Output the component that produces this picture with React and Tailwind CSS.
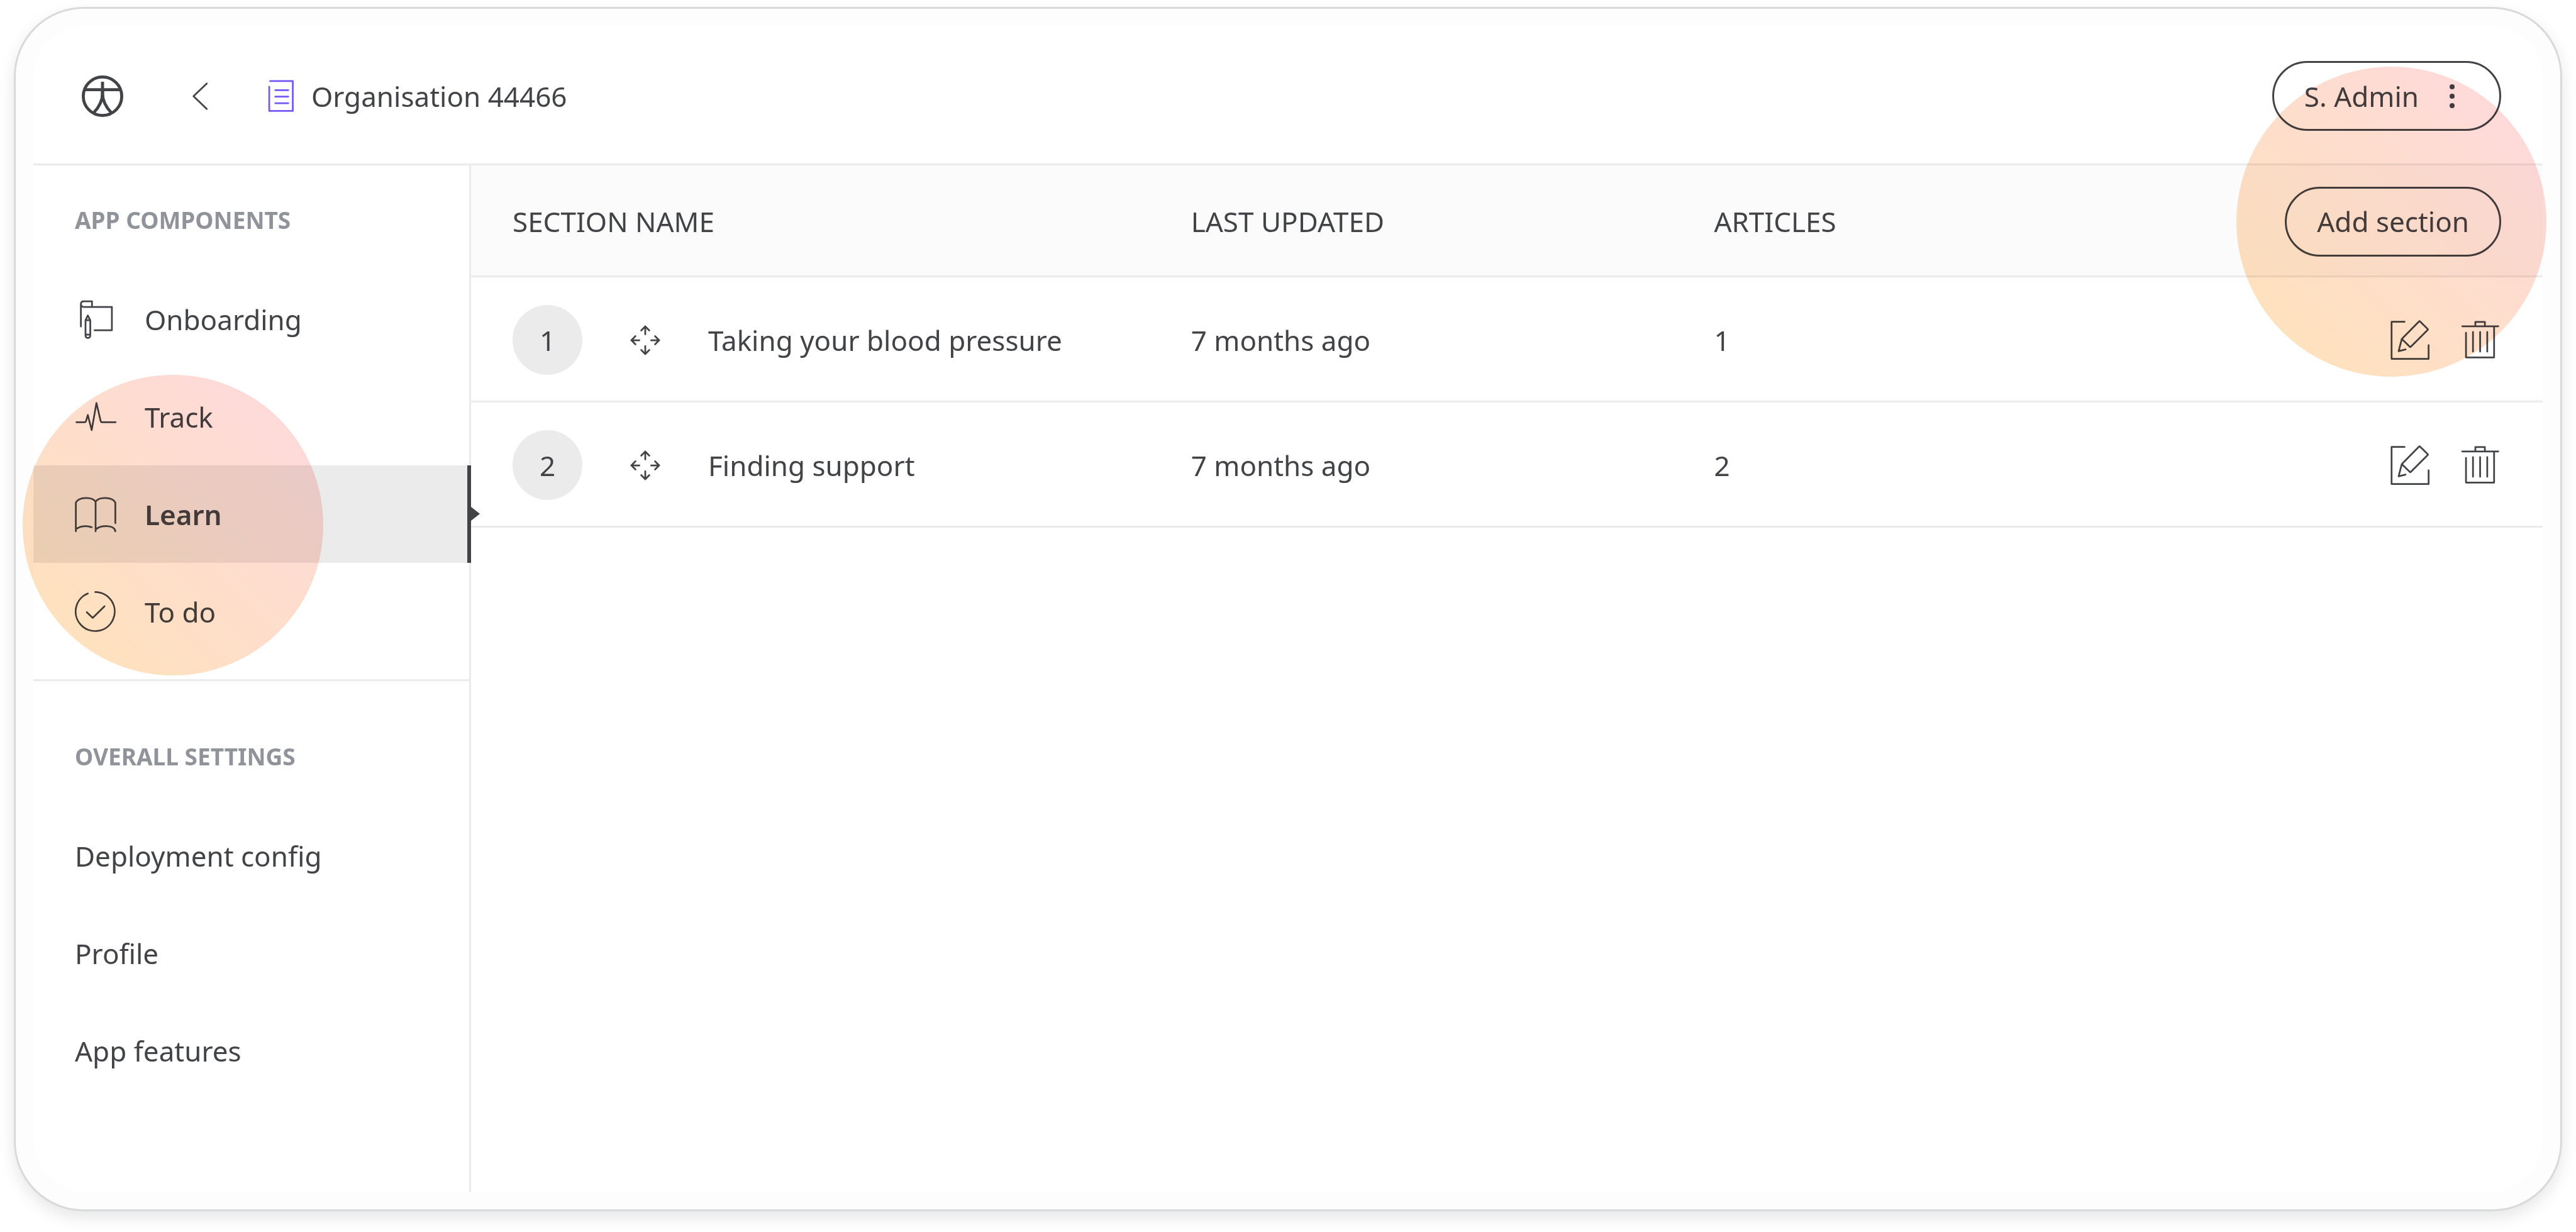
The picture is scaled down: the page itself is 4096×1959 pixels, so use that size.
import React from "react";

const ink = "#424347";

function Icon({ viewBox, width = 12, color = ink, cap = "round", label, children }) {
  return (
    <svg
      className="block size-[66px] shrink-0"
      viewBox={viewBox}
      fill="none"
      stroke={color}
      strokeWidth={width}
      strokeLinecap={cap}
      strokeLinejoin="round"
      role={label ? "img" : undefined}
      aria-label={label}
      aria-hidden={label ? undefined : true}
    >
      {children}
    </svg>
  );
}

const LogoIcon = () => (
  <Icon viewBox="188 172 96 96" width={7} cap="butt" label="Home">
    <circle cx="236" cy="220" r="44.5" />
    <path d="M236 186.500V222M194 205H278" />
    <path d="M236 205V214C236 232 226 247 215.500 258.500M236 205V214C236 232 246 247 256.500 258.500" />
  </Icon>
);

const ChevronIcon = () => (
  <Icon viewBox="412 172 96 96" width={4}>
    <path d="M475.700 190.500L445 220L475.700 249.500" />
  </Icon>
);

const DocumentIcon = () => (
  <Icon viewBox="597 172 96 96" width={4} color="#7657F5">
    <path d="M619.500 185H672V254H617.500V198" />
    <path d="M631.500 206H661.500M631.500 221H661.500M631.500 236H661.500" />
  </Icon>
);

const OnboardingIcon = () => (
  <Icon viewBox="36 42 288 288">
    <path d="M78 235V80C78 68 86 60 98 60H155V98M78 80C79 92 87 99 98 99H293V261H173" />
    <path d="M110 191L126 158L143 191V297C143 307 136 314 126.500 314C117 314 110 307 110 297Z M110 191H143M110 291H143" />
  </Icon>
);

const TrackIcon = () => (
  <Icon viewBox="36 24 288 288">
    <path d="M47 204H106Q111 204 113 198L126 154L153 259L186 71L215 196Q217 204 222 204H319" />
  </Icon>
);

const LearnIcon = () => (
  <Icon viewBox="36 36 288 288">
    <path d="M153 269C122 257 72 258 43 283V297V98C64 57 158 57 180 92V297M180 92C202 57 296 57 317 98V240M180 285C212 252 312 250 317 297" />
  </Icon>
);

const TodoIcon = () => (
  <Icon viewBox="36 48 288 288">
    <path d="M178 54A135.500 135.500 0 1 1 126 64" />
    <path d="M119 194L160 233L242 153" />
  </Icon>
);

const MoveIcon = () => (
  <Icon viewBox="36 36 288 288">
    <path d="M180 139V83M152 112L180 84L208 112" />
    <path d="M180 221V277M152 248L180 276L208 248" />
    <path d="M139 180H83M112 152L84 180L112 208" />
    <path d="M221 180H277M248 152L276 180L248 208" />
  </Icon>
);

const EditIcon = () => (
  <Icon viewBox="252 156 288 288">
    <path d="M354 172H264V429H521V334" />
    <path d="M361 364L313 376L335 291L454 170Q458 166 462 170L514 221Q518 225 514 229L398 345Q394 349 390 345L335 291" />
  </Icon>
);

const TrashIcon = () => (
  <Icon viewBox="732 156 288 288">
    <path d="M750 203H1000M841 203V173H907V203M776 248V419H971V203" />
    <path d="M824.500 243V379M874 243V379M923.500 243V379" />
  </Icon>
);

const DotsIcon = () => (
  <svg className="block size-[66px] shrink-0" viewBox="0 0 66 66" fill={ink} aria-hidden="true">
    <circle cx="33" cy="18" r="4" />
    <circle cx="33" cy="33" r="4" />
    <circle cx="33" cy="48" r="4" />
  </svg>
);

const components = [
  { name: "Onboarding", icon: OnboardingIcon },
  { name: "Track", icon: TrackIcon },
  { name: "Learn", icon: LearnIcon, active: true },
  { name: "To do", icon: TodoIcon },
];

const settings = ["Deployment config", "Profile", "App features"];

const sections = [
  { id: 1, name: "Taking your blood pressure", updated: "7 months ago", articles: 1 },
  { id: 2, name: "Finding support", updated: "7 months ago", articles: 2 },
];

const pill =
  "inline-flex h-[111px] items-center rounded-full border-[3px] border-[#424347] text-[44px] leading-[60px] font-normal";

function NavItem({ name, icon: Glyph, active }) {
  return (
    <li>
      <a
        href="#"
        aria-current={active ? "page" : undefined}
        className={
          active
            ? "relative -mr-[3px] flex h-[155px] items-center gap-[45px] border-r-[6px] border-[#424347] bg-[#ebebeb] pl-[66px] font-semibold"
            : "flex h-[155px] items-center gap-[45px] pl-[66px]"
        }
      >
        {Glyph && <Glyph />}
        <span>{name}</span>
        {active && (
          <svg className="absolute top-[66px] -right-[20px] h-[22px] w-[14px]" viewBox="0 0 14 22" fill={ink} aria-hidden="true">
            <path d="M0 0L14 11L0 22Z" />
          </svg>
        )}
      </a>
    </li>
  );
}

function Sidebar() {
  const heading = "pl-[66px] text-[37px] leading-[52px] font-bold text-[#909399]";
  return (
    <nav className="relative w-[696px] shrink-0 border-r-[3px] border-[#ebebeb]">
      <div className="border-b-[3px] border-[#ebebeb] pt-[61px] pb-[30px]">
        <h2 className={heading}>APP COMPONENTS</h2>
        <ul className="pt-[54px]">
          {components.map((item) => (
            <NavItem key={item.name} {...item} />
          ))}
        </ul>
      </div>
      <div className="pt-[94px]">
        <h2 className={heading}>OVERALL SETTINGS</h2>
        <ul className="pt-[54px]">
          {settings.map((name) => (
            <NavItem key={name} name={name} />
          ))}
        </ul>
      </div>
      <div
        className="pointer-events-none absolute top-[333px] -left-[17px] size-[478px] rounded-full bg-linear-to-tr from-[#ffe3b8] to-[#fdd8de] mix-blend-multiply"
        aria-hidden="true"
      />
    </nav>
  );
}

function SectionTable() {
  const head = "h-[178px] border-b-[3px] border-[#ebebeb] bg-[#fbfbfb] pt-[3px] text-left font-normal";
  const cell = "h-[199px] border-b-[3px] border-[#ebebeb] pt-[3px]";
  return (
    <table className="w-full table-fixed border-separate border-spacing-0">
      <colgroup>
        <col className="w-[34.75%]" />
        <col className="w-[25.25%]" />
        <col className="w-[20%]" />
        <col className="w-[20%]" />
      </colgroup>
      <thead>
        <tr>
          <th className={head + " pl-[66px]"}>SECTION NAME</th>
          <th className={head}>LAST UPDATED</th>
          <th className={head}>ARTICLES</th>
          <th className={head + " pr-[66px]"}>
            <div className="flex justify-end">
              <button type="button" className={pill + " px-[48px]"}>
                Add section
              </button>
            </div>
          </th>
        </tr>
      </thead>
      <tbody>
        {sections.map((s) => (
          <tr key={s.id}>
            <td className={cell + " pl-[66px]"}>
              <div className="flex items-center gap-[67px]">
                <span className="flex size-[111px] items-center justify-center rounded-full bg-[#ebebeb]">{s.id}</span>
                <button type="button" aria-label={"Move " + s.name}>
                  <MoveIcon />
                </button>
                <span>{s.name}</span>
              </div>
            </td>
            <td className={cell}>{s.updated}</td>
            <td className={cell}>{s.articles}</td>
            <td className={cell + " pr-[66px]"}>
              <div className="flex justify-end gap-[45px]">
                <button type="button" aria-label={"Edit " + s.name}>
                  <EditIcon />
                </button>
                <button type="button" aria-label={"Delete " + s.name}>
                  <TrashIcon />
                </button>
              </div>
            </td>
          </tr>
        ))}
      </tbody>
    </table>
  );
}

export default function App() {
  return (
    <div className="flex min-h-screen bg-white px-[22px] pt-[11px] pb-[33px] font-['Noto_Sans',sans-serif] text-[44px] leading-[60px] text-[#424347]">
      <div className="flex grow rounded-[111px] border-[3px] border-[#d8d9da] bg-[#fdfdfd] p-[28px] shadow-[0_10px_26px_rgba(0,0,0,0.1)]">
        <div className="relative flex grow flex-col rounded-[84px] bg-white">
          <header className="flex h-[221px] items-center justify-between border-b-[3px] border-[#ebebeb] pt-[3px] pr-[66px] pl-[77px]">
            <div className="flex items-center">
              <a href="#">
                <LogoIcon />
              </a>
              <button type="button" aria-label="Back" className="ml-[89px]">
                <ChevronIcon />
              </button>
              <div className="ml-[63px] flex items-center gap-[15px]">
                <DocumentIcon />
                <h1>Organisation 44466</h1>
              </div>
            </div>
            <button type="button" className={pill + " gap-[20px] pr-[42px] pl-[48px]"}>
              S. Admin
              <DotsIcon />
            </button>
          </header>
          <div className="flex grow">
            <Sidebar />
            <main className="min-w-0 grow">
              <SectionTable />
            </main>
          </div>
          <div
            className="pointer-events-none absolute top-[64px] -right-[6px] size-[493px] rounded-full bg-linear-to-tr from-[#ffe3b8] to-[#fdd8de] mix-blend-multiply"
            aria-hidden="true"
          />
        </div>
      </div>
    </div>
  );
}
